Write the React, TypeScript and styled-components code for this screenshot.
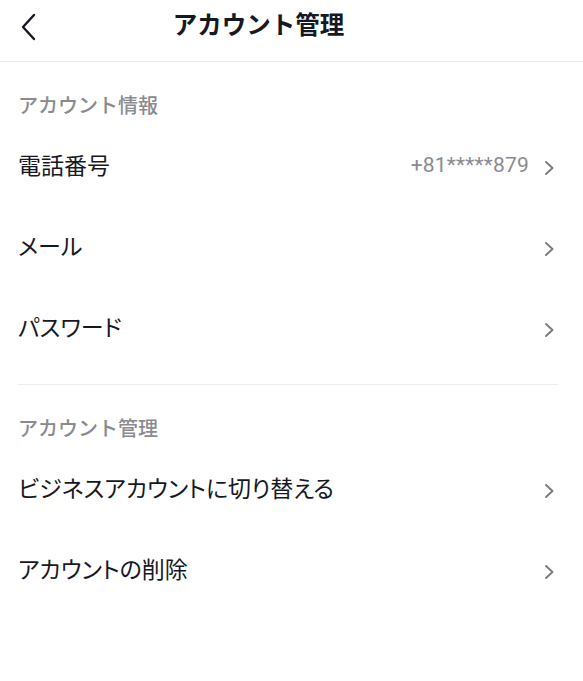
import React from 'react'
import styled, { createGlobalStyle } from 'styled-components'

const GlobalStyle = createGlobalStyle`
  html, body {
    margin: 0;
    padding: 0;
    background: #ffffff;
  }
  body {
    font-family: "Noto Sans CJK JP", "Noto Sans", sans-serif;
    color: #161823;
  }
`

const Page = styled.div`
  width: 583px;
  min-height: 681px;
  background: #ffffff;
`

const Header = styled.header`
  position: relative;
  height: 61px;
  display: flex;
  align-items: center;
  justify-content: center;
  border-bottom: 1px solid #e6e6e8;
`

const BackButton = styled.button`
  position: absolute;
  left: 14px;
  top: 10px;
  width: 28px;
  height: 34px;
  padding: 0;
  border: none;
  background: none;
  display: flex;
  align-items: center;
  justify-content: center;
`

const Title = styled.h1`
  margin: 0 66px 12px 0;
  font-size: 24.5px;
  font-weight: 700;
  line-height: 1;
  color: #161823;
`

const Section = styled.section<{ $last?: boolean }>`
  margin: 0 25px 0 18px;
  padding: 20px 0 ${p => (p.$last ? '0' : '15px')};
  border-bottom: ${p => (p.$last ? 'none' : '1px solid #ededef')};
`

const SectionLabel = styled.div`
  height: 44px;
  display: flex;
  align-items: center;
  font-size: 20px;
  font-weight: 500;
  color: #8a8b91;
`

const Row = styled.div`
  height: 81px;
  display: flex;
  align-items: center;
  gap: 14px;
`

const RowLabel = styled.span`
  flex: 1;
  margin-bottom: 6px;
  font-size: 23px;
  font-weight: 400;
  font-feature-settings: "palt";
  color: #161823;
`

const RowValue = styled.span`
  margin-bottom: 4px;
  font-family: Roboto, "Liberation Sans", sans-serif;
  font-size: 21px;
  color: #8a8b91;
  letter-spacing: 0.2px;
`

const Chevron = styled.svg`
  width: 12px;
  height: 16px;
  margin: 3px 3px 0 0;
  flex-shrink: 0;
`

const ChevronRight = () => (
  <Chevron viewBox="0 0 12 16" fill="none">
    <path d="M3 2 L9.5 8 L3 14" stroke="#7a7b80" strokeWidth="1.9" strokeLinecap="round" strokeLinejoin="round" />
  </Chevron>
)

type Item = { label: string; value?: string }

const sections: { title: string; items: Item[] }[] = [
  {
    title: 'アカウント情報',
    items: [
      { label: '電話番号', value: '+81*****879' },
      { label: 'メール' },
      { label: 'パスワード' },
    ],
  },
  {
    title: 'アカウント管理',
    items: [
      { label: 'ビジネスアカウントに切り替える' },
      { label: 'アカウントの削除' },
    ],
  },
]

const App = () => {
  return (
    <Page>
      <GlobalStyle />
      <Header>
        <BackButton aria-label="戻る">
          <svg width="20" height="30" viewBox="0 0 20 30" fill="none">
            <path d="M16 3 L5 15 L16 27" stroke="#161823" strokeWidth="2.4" strokeLinecap="round" strokeLinejoin="round" />
          </svg>
        </BackButton>
        <Title>アカウント管理</Title>
      </Header>
      {sections.map((s, i) => (
        <Section key={s.title} $last={i === sections.length - 1}>
          <SectionLabel>{s.title}</SectionLabel>
          {s.items.map(item => (
            <Row key={item.label}>
              <RowLabel>{item.label}</RowLabel>
              {item.value && <RowValue>{item.value}</RowValue>}
              <ChevronRight />
            </Row>
          ))}
        </Section>
      ))}
    </Page>
  )
}

export default App
